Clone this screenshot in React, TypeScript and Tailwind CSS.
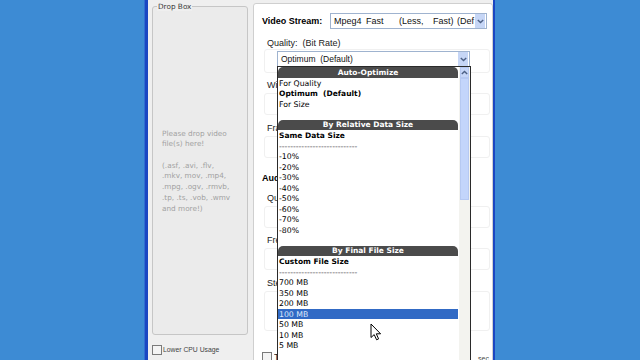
import React from "react";

type Row =
  | { k: "h"; t: string }
  | { k: "i"; t: string }
  | { k: "b"; t: string }
  | { k: "d" }
  | { k: "e" }
  | { k: "s"; t: string };

const rows: Row[] = [
  { k: "h", t: "Auto-Optimize" },
  { k: "i", t: "For Quality" },
  { k: "b", t: "Optimum  (Default)" },
  { k: "i", t: "For Size" },
  { k: "e" },
  { k: "h", t: "By Relative Data Size" },
  { k: "b", t: "Same Data Size" },
  { k: "d" },
  { k: "i", t: "-10%" },
  { k: "i", t: "-20%" },
  { k: "i", t: "-30%" },
  { k: "i", t: "-40%" },
  { k: "i", t: "-50%" },
  { k: "i", t: "-60%" },
  { k: "i", t: "-70%" },
  { k: "i", t: "-80%" },
  { k: "e" },
  { k: "h", t: "By Final File Size" },
  { k: "b", t: "Custom File Size" },
  { k: "d" },
  { k: "i", t: "700 MB" },
  { k: "i", t: "350 MB" },
  { k: "i", t: "200 MB" },
  { k: "s", t: "100 MB" },
  { k: "i", t: "50 MB" },
  { k: "i", t: "10 MB" },
  { k: "i", t: "5 MB" },
  { k: "e" },
];

const listFont = { fontFamily: '"DejaVu Sans", Verdana, sans-serif' };
const uiFont = { fontFamily: '"Liberation Sans", Arial, sans-serif' };

function ChevronDown() {
  return (
    <svg width="7" height="5" viewBox="0 0 7 5">
      <path d="M0.8 1 L3.5 3.6 L6.2 1" fill="none" stroke="#4d6185" strokeWidth="1.4" />
    </svg>
  );
}

function ChevronUp() {
  return (
    <svg width="7" height="5" viewBox="0 0 7 5">
      <path d="M0.8 4 L3.5 1.4 L6.2 4" fill="none" stroke="#4d6185" strokeWidth="1.4" />
    </svg>
  );
}

function ListRow({ r }: { r: Row }) {
  if (r.k === "h")
    return (
      <div className="h-[10.5px] mr-[1px] rounded-t-[5px] bg-[#4b4b4b] flex items-center justify-center">
        <span className="text-[7.5px] font-bold leading-none text-white">{r.t}</span>
      </div>
    );
  if (r.k === "e") return <div className="h-[10.5px]" />;
  if (r.k === "d")
    return (
      <div className="h-[10.5px] pl-[1px] text-[7.75px] leading-[11.5px] text-[#444] whitespace-pre overflow-hidden">
        {"----------------------------"}
      </div>
    );
  if (r.k === "s")
    return (
      <div className="h-[10.5px] mr-[1px] bg-[#316ac5] pl-[1px] text-[7.75px] leading-[11.5px] text-[#dde7fa] whitespace-pre">
        {r.t}
      </div>
    );
  return (
    <div
      className={
        "h-[10.5px] pl-[1px] leading-[11.5px] text-black whitespace-pre " +
        (r.k === "b" ? "text-[7.5px] font-bold" : "text-[7.75px]")
      }
    >
      {r.t}
    </div>
  );
}

function FaintBox({ h, mt }: { h: number; mt: number }) {
  return (
    <div
      className="ml-[10px] mr-[2px] rounded-[3px] border border-[#f0f0f0]"
      style={{ height: h, marginTop: mt }}
    />
  );
}

function Label({ text, mt, bold }: { text: string; mt: number; bold?: boolean }) {
  return (
    <div
      className={
        "h-[12px] w-[23px] overflow-hidden whitespace-nowrap text-[9px] leading-[12px] " +
        (bold ? "pl-[8px] font-bold text-black" : "pl-[13px] text-[#222]")
      }
      style={{ marginTop: mt }}
    >
      {text}
    </div>
  );
}

export default function App() {
  return (
    <div className="relative w-[640px] h-[360px] overflow-hidden bg-[#3d8bd4] flex" style={uiFont}>
      {/* left desktop */}
      <div className="w-[144px] shrink-0" />
      <div className="w-[1px] shrink-0 bg-[#2f6fd0]" />
      <div className="w-[3px] shrink-0 bg-[#1a46c2]" />

      {/* window body */}
      <div className="w-[345px] shrink-0 bg-[#efefef] flex">
        {/* left column */}
        <div className="w-[105px] shrink-0 flex flex-col pl-[4px] pr-[5px] pt-[6px]">
          <div className="relative h-[329px] rounded-[3px] border border-[#c6c6c6] bg-[#ebebeb] flex flex-col justify-center pl-[9px] pt-[2px]">
            <span
              className="absolute -top-[5px] left-[4px] px-[1px] bg-[#efefef] text-[7.3px] leading-[9px] text-[#3a3a3a]"
              style={listFont}
            >
              Drop Box
            </span>
            <div className="text-[7.3px] leading-[10.7px] text-[#a2a2a2]" style={listFont}>
              <div>Please drop video</div>
              <div>file(s) here!</div>
              <div className="h-[10.7px]" />
              <div>(.asf, .avi, .flv,</div>
              <div>.mkv, mov, .mp4,</div>
              <div>.mpg, .ogv, .rmvb,</div>
              <div>.tp, .ts, .vob, .wmv</div>
              <div>and more!)</div>
            </div>
          </div>
          <div className="mt-[10px] flex items-center gap-[1px]">
            <div className="w-[10px] h-[10px] border border-[#7a7a7a] bg-[#f4f4f4]" />
            <span className="text-[6.8px] text-[#444] leading-none">Lower CPU Usage</span>
          </div>
        </div>

        {/* right white panel */}
        <div className="w-[240px] shrink-0 mt-[3px] h-[400px] rounded-[3px] border border-[#cfcfcf] bg-white flex flex-col">
          <div className="mt-[9px] h-[16px] flex items-center">
            <span className="w-[76px] pl-[8px] text-[9px] font-bold text-black leading-none">Video Stream:</span>
            <div className="w-[157px] h-[16px] border border-[#9fb3cf] flex items-center">
              <div className="flex-1 pl-[3px] flex text-[9px] leading-none text-[#111] whitespace-pre overflow-hidden">
                <span className="w-[32px] shrink-0">Mpeg4</span>
                <span className="w-[33px] shrink-0">Fast</span>
                <span className="w-[34px] shrink-0">(Less,</span>
                <span className="w-[24px] shrink-0">Fast)</span>
                <span className="shrink-0">(Def</span>
              </div>
              <div className="w-[10px] h-[14px] mr-[1px] bg-[#c6d6f6] flex items-center justify-center">
                <ChevronDown />
              </div>
            </div>
          </div>
          <div className="mt-[8px] h-[12px] pl-[13px] text-[9px] leading-[12px] text-[#222] whitespace-pre">
            {"Quality:  (Bit Rate)"}
          </div>
          <div className="ml-[10px] mr-[2px] h-[24px] rounded-[3px] border border-[#f0f0f0] pt-[1px] pl-[12px]">
            <div className="w-[193px] h-[16px] border border-[#9fb3cf] flex items-center">
              <div className="flex-1 pl-[3px] text-[8.5px] leading-none text-[#111] whitespace-pre">
                {"Optimum  (Default)"}
              </div>
              <div className="w-[10px] h-[14px] mr-[1px] bg-[#c6d6f6] flex items-center justify-center">
                <ChevronDown />
              </div>
            </div>
          </div>
          <Label text="Width" mt={6} />
          <FaintBox h={22} mt={2} />
          <Label text="Frame Rate" mt={7} />
          <FaintBox h={22} mt={2} />
          <Label text="Audio Stream:" mt={14} bold />
          <Label text="Quality" mt={8} />
          <FaintBox h={22} mt={2} />
          <Label text="Frequency" mt={6} />
          <FaintBox h={22} mt={2} />
          <Label text="Stereo" mt={7} />
          <FaintBox h={40} mt={2} />
          <div className="mt-[21px] flex items-start pl-[8px] pr-[3px]">
            <div className="w-[10px] h-[10px] border border-[#7a7a7a] bg-[#f4f4f4] shrink-0" />
            <span className="ml-[2px] w-[8px] overflow-hidden whitespace-nowrap text-[9px] leading-[10px] text-[#222]">
              Two-Pass Encoding
            </span>
            <span className="ml-auto mt-[2px] text-[7px] leading-[10px] text-[#444]">sec</span>
          </div>
        </div>

        {/* right strip */}
        <div className="flex-1 bg-[#ededed]" />
      </div>

      <div className="w-[2px] shrink-0 bg-[#1a46c2]" />
      <div className="flex-1" />

      {/* dropdown list overlay */}
      <div
        className="absolute left-[277px] top-[66px] w-[194px] h-[300px] bg-white border-x border-t border-[#2a2a2a] flex"
        style={listFont}
      >
        <div className="w-[181px] flex flex-col">
          {rows.map((r, i) => (
            <ListRow key={i} r={r} />
          ))}
        </div>
        <div className="w-[11px] flex flex-col bg-[#f3f3ef]">
          <div className="h-[11px] mx-[1px] bg-[#c6d6f8] border border-[#b6c9f2] flex items-center justify-center">
            <ChevronUp />
          </div>
          <div className="h-[122px] mx-[1px] bg-[#c3d5fb] border border-[#b6c9f2]" />
        </div>
      </div>

      {/* mouse cursor */}
      <svg className="absolute left-[370px] top-[323px]" width="12" height="18" viewBox="0 0 12 18">
        <path
          d="M1 1 L1 14.5 L4.2 11.6 L6.6 16.8 L8.6 15.9 L6.3 10.8 L10.6 10.8 Z"
          fill="#ffffff"
          stroke="#000000"
          strokeWidth="1"
          strokeLinejoin="round"
        />
      </svg>
    </div>
  );
}
